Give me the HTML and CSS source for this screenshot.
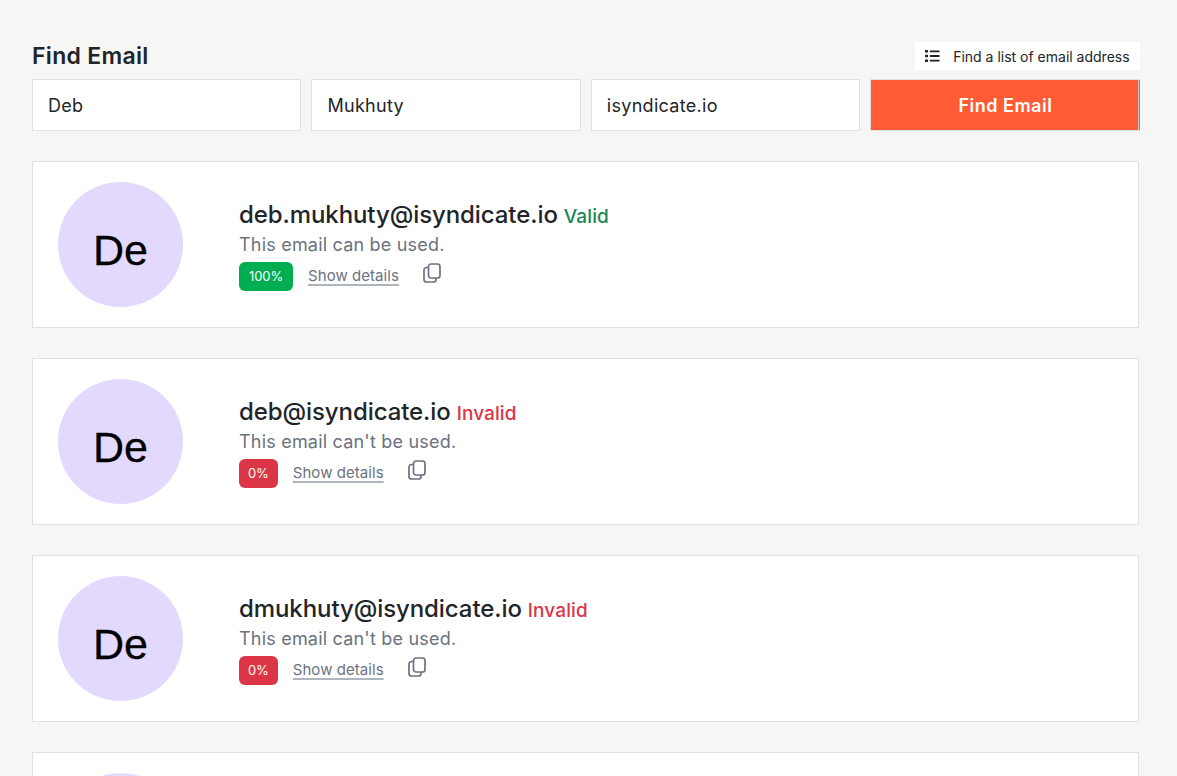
FILE: index.html
```html
<!DOCTYPE html>
<html>
<head>
    <meta charset="UTF-8">
    <meta name="viewport" content="width=device-width, initial-scale=1.0">
    <title>Find Email</title>
    <link rel="stylesheet" href="styles.css">
</head>
<body>
    <div class="page">
        <div class="top-row">
            <h1 class="title">Find Email</h1>
            <button class="list-button">
                <svg class="list-icon" width="15" height="16" viewBox="0 0 15 16">
                    <path d="M0 2h3v2.600H0zM0 6.700h3v2.600H0zM0 11.400h3V14H0z" fill="#212529"/>
                    <path d="M4.800 3.300H14.500M4.800 8H14.500M4.800 12.700H14.500" stroke="#212529" stroke-width="1.800" fill="none"/>
                </svg>
                Find a list of email address
            </button>
        </div>
        <div class="search-row">
            <input class="search-input" type="text" value="Deb">
            <input class="search-input" type="text" value="Mukhuty">
            <input class="search-input" type="text" value="isyndicate.io">
            <button class="search-button">Find Email</button>
        </div>

        <div class="card">
            <div class="avatar">De</div>
            <div class="info">
                <div class="email-line">
                    <span class="email">deb.mukhuty@isyndicate.io</span>
                    <span class="status valid">Valid</span>
                </div>
                <div class="note">This email can be used.</div>
                <div class="meta">
                    <span class="score score-good">100%</span>
                    <a class="details" href="#">Show details</a>
                    <svg class="copy-icon" width="20" height="20" viewBox="0 0 20 20">
                        <rect x="6.500" y="1" width="11.500" height="14" rx="2.500"/>
                        <path d="M6.500 4.500H4.500A2.500 2.500 0 0 0 2 7v9.500A2.500 2.500 0 0 0 4.500 19h7a2.500 2.500 0 0 0 2.500-2.500V15"/>
                    </svg>
                </div>
            </div>
        </div>

        <div class="card">
            <div class="avatar">De</div>
            <div class="info">
                <div class="email-line">
                    <span class="email">deb@isyndicate.io</span>
                    <span class="status invalid">Invalid</span>
                </div>
                <div class="note">This email can't be used.</div>
                <div class="meta">
                    <span class="score score-bad">0%</span>
                    <a class="details" href="#">Show details</a>
                    <svg class="copy-icon" width="20" height="20" viewBox="0 0 20 20">
                        <rect x="6.500" y="1" width="11.500" height="14" rx="2.500"/>
                        <path d="M6.500 4.500H4.500A2.500 2.500 0 0 0 2 7v9.500A2.500 2.500 0 0 0 4.500 19h7a2.500 2.500 0 0 0 2.500-2.500V15"/>
                    </svg>
                </div>
            </div>
        </div>

        <div class="card">
            <div class="avatar">De</div>
            <div class="info">
                <div class="email-line">
                    <span class="email">dmukhuty@isyndicate.io</span>
                    <span class="status invalid">Invalid</span>
                </div>
                <div class="note">This email can't be used.</div>
                <div class="meta">
                    <span class="score score-bad">0%</span>
                    <a class="details" href="#">Show details</a>
                    <svg class="copy-icon" width="20" height="20" viewBox="0 0 20 20">
                        <rect x="6.500" y="1" width="11.500" height="14" rx="2.500"/>
                        <path d="M6.500 4.500H4.500A2.500 2.500 0 0 0 2 7v9.500A2.500 2.500 0 0 0 4.500 19h7a2.500 2.500 0 0 0 2.500-2.500V15"/>
                    </svg>
                </div>
            </div>
        </div>

        <div class="card">
            <div class="avatar"></div>
        </div>
    </div>
</body>
</html>
```

FILE: styles.css
```css
html, body {
    margin: 0;
    height: 100%;
    overflow: hidden;
}
body {
    background-color: #f6f6f5;
    color: #212529;
    font-family: "Inter", "Liberation Sans", sans-serif;
}
.page {
    width: 1107.600px;
    padding: 42px 37px 0 32px;
}
.top-row {
    display: flex;
    justify-content: space-between;
    align-items: center;
    height: 28px;
    margin-bottom: 9px;
}
.title {
    margin: 0;
    font-size: 23px;
    font-weight: 600;
    letter-spacing: 0.3px;
}
.list-button {
    display: flex;
    align-items: center;
    gap: 13px;
    height: 28px;
    padding: 0 10px;
    background-color: #fff;
    border: none;
    color: #212529;
    font-family: inherit;
    font-size: 14px;
}
.search-row {
    display: grid;
    grid-template-columns: repeat(4, 1fr);
    gap: 10px;
    margin-bottom: 30px;
}
.search-input {
    box-sizing: border-box;
    width: 100%;
    height: 52px;
    padding: 0 15px;
    background-color: #fff;
    border: 1px solid #dee2e6;
    color: #212529;
    font-family: inherit;
    font-size: 18px;
    letter-spacing: 0.3px;
}
.search-button {
    height: 52px;
    background-color: #ff5c35;
    border: 1px solid #dee2e6;
    border-right: none;
    box-shadow: inset -1px 0 0 #ff5c35, inset -2px 0 0 #c9c4c0;
    color: #fff;
    font-family: inherit;
    font-size: 18px;
    font-weight: 600;
    letter-spacing: 0.5px;
}
.card {
    box-sizing: border-box;
    display: flex;
    height: 167px;
    margin: 0 1px 30px 0;
    padding: 20px 25px;
    background-color: #fff;
    border: 1px solid #dee2e6;
}
.avatar {
    box-sizing: border-box;
    flex: none;
    display: flex;
    justify-content: center;
    align-items: center;
    width: 125px;
    height: 125px;
    padding-top: 12px;
    border-radius: 50%;
    background-color: #e2d9fd;
    color: #000;
    font-family: "Liberation Sans", sans-serif;
    font-size: 43px;
    -webkit-text-stroke: 0.3px #000;
}
.info {
    margin-left: 56px;
    padding-top: 18px;
}
.email-line {
    display: flex;
    align-items: baseline;
    gap: 6px;
    height: 31px;
}
.email {
    font-size: 24px;
    font-weight: 550;
    letter-spacing: -0.08px;
}
.status {
    font-size: 19px;
    font-weight: 500;
    letter-spacing: 0.1px;
}
.valid {
    color: #198754;
}
.invalid {
    color: #dc3545;
}
.note {
    height: 28px;
    color: #6b7280;
    font-size: 18px;
    line-height: 28px;
    letter-spacing: 0.2px;
}
.meta {
    display: flex;
    align-items: center;
    height: 30px;
    margin-top: 2px;
}
.score {
    padding: 0 10px;
    height: 29px;
    border-radius: 6px;
    color: #fff;
    font-size: 13px;
    line-height: 29px;
    letter-spacing: -0.1px;
}
.score-good {
    background-color: #00ad50;
}
.score-bad {
    padding: 0 9px;
    background-color: #dc3545;
}
.details {
    margin-left: 15px;
    margin-top: -1px;
    color: #6b7280;
    font-size: 15px;
    letter-spacing: 0.05px;
    text-decoration: underline;
    text-decoration-thickness: 1.500px;
    text-underline-offset: 3px;
    text-decoration-color: #adb5bd;
}
.copy-icon {
    margin-left: 23px;
    margin-top: -6px;
    fill: none;
    stroke: #6b7280;
    stroke-width: 1.700;
}
```
